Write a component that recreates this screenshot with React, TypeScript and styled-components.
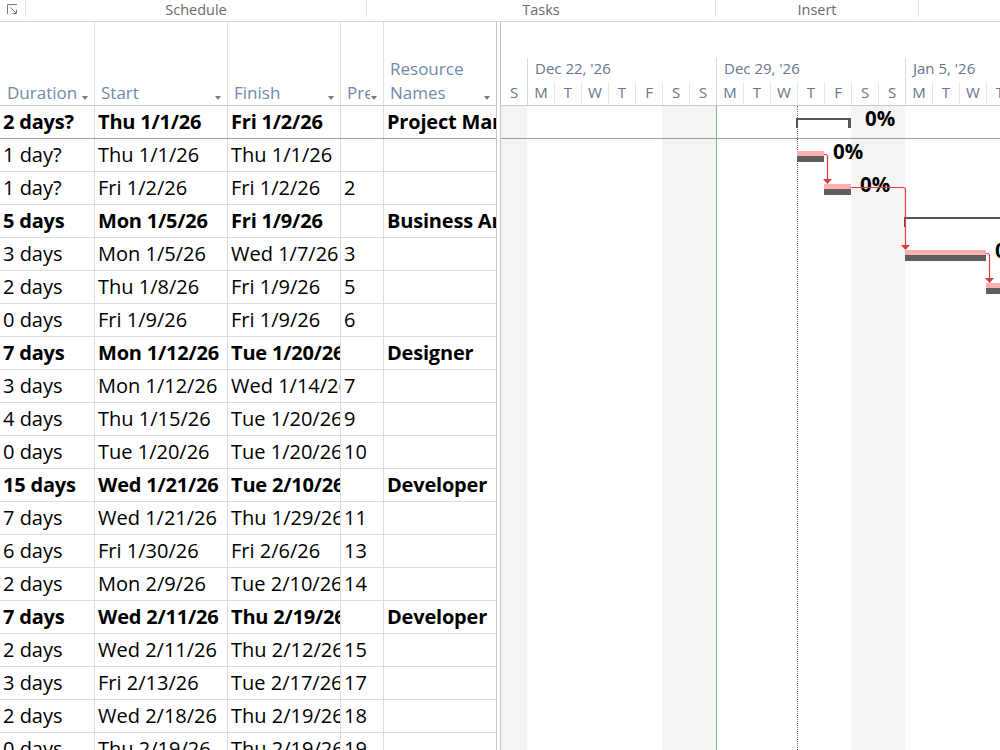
import React from 'react';
import styled, { createGlobalStyle } from 'styled-components';

const FONT = `"Open Sans", "Noto Sans", "Liberation Sans", sans-serif`;
const DAY = 27;
const FIRST = 26;
const dayX = (d: number) => (d === 0 ? 0 : FIRST + (d - 1) * DAY);
const ROW = 33;

const GlobalStyle = createGlobalStyle`
  html, body { margin: 0; padding: 0; background: #fff; overflow: hidden; }
  body { font-family: ${FONT}; }
  * { box-sizing: border-box; }
`;

const Page = styled.div`
  width: 1000px;
  height: 750px;
  overflow: hidden;
  display: flex;
  flex-direction: column;
  background: #fff;
`;

const Ribbon = styled.div`
  height: 22px;
  flex-shrink: 0;
  display: flex;
  border-bottom: 1px solid #d5d5d5;
`;

const RibbonGroup = styled.div<{ $w?: number }>`
  ${(p) => (p.$w ? `width: ${p.$w}px; flex-shrink: 0;` : 'flex: 1;')}
  height: 17px;
  padding-top: 2px;
  border-right: 1px solid ${(p) => (p.$w ? '#e0e0e0' : 'transparent')};
  display: flex;
  align-items: center;
  justify-content: center;
  font-size: 14.5px;
  line-height: 15px;
  color: #6b6b6b;
  white-space: nowrap;
`;

const Launcher = styled.svg`
  display: block;
`;

const Main = styled.div`
  flex: 1;
  display: flex;
  min-height: 0;
`;

const COLS = '95px 133px 113px 43px 112px';

const Table = styled.div`
  width: 497px;
  flex-shrink: 0;
  border-right: 1px solid #c4c4c4;
  display: flex;
  flex-direction: column;
  overflow: hidden;
`;

const HeaderRow = styled.div`
  display: grid;
  grid-template-columns: ${COLS};
  height: 84px;
  flex-shrink: 0;
  border-bottom: 1px solid #c9c9c9;
`;

const HeaderCell = styled.div<{ $last?: boolean; $first?: boolean }>`
  display: flex;
  align-items: flex-end;
  padding: 0 6px 0 ${(p) => (p.$first ? 7 : 6)}px;
  border-right: ${(p) => (p.$last ? 'none' : '1px solid #e1e1e1')};
  font-size: 17px;
  line-height: 24px;
  color: #7189aa;
  min-width: 0;
`;

const HeaderLabel = styled.span`
  flex: 1;
  min-width: 0;
  overflow: hidden;
  white-space: pre-line;
`;

const SortArrow = styled.span`
  flex-shrink: 0;
  width: 0;
  height: 0;
  margin-bottom: 5px;
  margin-left: 1px;
  border-left: 3.5px solid transparent;
  border-right: 3.5px solid transparent;
  border-top: 4px solid #7a7a7a;
`;

const BodyRow = styled.div<{ $dark?: boolean }>`
  display: grid;
  grid-template-columns: ${COLS};
  height: ${ROW}px;
  flex-shrink: 0;
  border-bottom: 1px solid ${(p) => (p.$dark ? '#9d9d9d' : '#dcdcdc')};
`;

const Cell = styled.div<{ $bold?: boolean; $last?: boolean }>`
  padding: 0 0 0 3px;
  font-size: 20px;
  line-height: 32px;
  font-weight: ${(p) => (p.$bold ? 700 : 400)};
  letter-spacing: ${(p) => (p.$bold ? '-0.2px' : '0')};
  color: #000;
  white-space: nowrap;
  overflow: hidden;
  border-right: ${(p) => (p.$last ? 'none' : '1px solid #dcdcdc')};
`;

const Gantt = styled.div`
  flex: 1;
  min-width: 0;
  margin-left: 3px;
  border-left: 1px solid #c4c4c4;
  display: flex;
  flex-direction: column;
  overflow: hidden;
`;

const GanttHeader = styled.div`
  height: 84px;
  flex-shrink: 0;
  border-bottom: 1px solid #c9c9c9;
  display: flex;
  flex-direction: column;
  justify-content: flex-end;
`;

const Tier = styled.div<{ $h: number }>`
  display: flex;
  height: ${(p) => p.$h}px;
`;

const WeekCell = styled.div<{ $w: number; $edge?: boolean }>`
  width: ${(p) => p.$w}px;
  flex-shrink: 0;
  border-left: ${(p) => (p.$edge ? 'none' : '1px solid #d9d9d9')};
  padding-left: 7px;
  font-size: 15px;
  line-height: 20px;
  color: #67768d;
  white-space: nowrap;
`;

const DayCell = styled.div<{ $w: number; $edge?: boolean; $week?: boolean }>`
  width: ${(p) => p.$w}px;
  flex-shrink: 0;
  border-left: ${(p) => (p.$edge ? 'none' : p.$week ? '1px solid #d9d9d9' : '1px solid #e6e6e6')};
  text-align: center;
  font-size: 15px;
  line-height: 20px;
  color: #67768d;
`;

const GanttBody = styled.div`
  flex: 1;
  position: relative;
  overflow: hidden;
`;

const Stripes = styled.div`
  position: absolute;
  inset: 0;
  display: flex;
  pointer-events: none;
`;

const Stripe = styled.div<{ $w: number; $weekend: boolean }>`
  width: ${(p) => p.$w}px;
  flex-shrink: 0;
  background: ${(p) => (p.$weekend ? '#f4f4f4' : 'transparent')};
`;

const Marker = styled.div<{ $kind: 'today' | 'start' }>`
  position: absolute;
  top: 0;
  bottom: 0;
  width: 0;
  border-left: 1px ${(p) => (p.$kind === 'today' ? 'solid #7cc27c' : 'dotted #6e6e6e')};
`;

const GanttRows = styled.div`
  position: relative;
  display: flex;
  flex-direction: column;
`;

const GanttRow = styled.div<{ $dark?: boolean }>`
  position: relative;
  height: ${ROW}px;
  flex-shrink: 0;
  border-bottom: 1px solid ${(p) => (p.$dark ? '#9d9d9d' : 'transparent')};
`;

const TaskBar = styled.div`
  position: absolute;
  top: 12px;
  height: 11px;
  background: linear-gradient(#ffb0b0 0 5px, #5e5e5e 5px 11px);
`;

const SummaryBar = styled.div`
  position: absolute;
  top: 12px;
  height: 10px;
  border-top: 2px solid #555;
  border-left: 2px solid #555;
  border-right: 3px solid #555;
`;

const BarLabel = styled.span`
  position: absolute;
  top: 2px;
  font-size: 20.5px;
  line-height: 20px;
  font-weight: 700;
  color: #000;
  white-space: nowrap;
`;

const Links = styled.svg`
  position: absolute;
  left: 0;
  top: 0;
  pointer-events: none;
`;

type Row = {
  dur: string;
  start: string;
  finish: string;
  pred: string;
  res: string;
  summary?: boolean;
  bar?: { kind: 'task' | 'summary'; day: number; span: number };
};

const rows: Row[] = [
  { dur: '2 days?', start: 'Thu 1/1/26', finish: 'Fri 1/2/26', pred: '', res: 'Project Manager', summary: true, bar: { kind: 'summary', day: 11, span: 2 } },
  { dur: '1 day?', start: 'Thu 1/1/26', finish: 'Thu 1/1/26', pred: '', res: '', bar: { kind: 'task', day: 11, span: 1 } },
  { dur: '1 day?', start: 'Fri 1/2/26', finish: 'Fri 1/2/26', pred: '2', res: '', bar: { kind: 'task', day: 12, span: 1 } },
  { dur: '5 days', start: 'Mon 1/5/26', finish: 'Fri 1/9/26', pred: '', res: 'Business Analyst', summary: true, bar: { kind: 'summary', day: 15, span: 5 } },
  { dur: '3 days', start: 'Mon 1/5/26', finish: 'Wed 1/7/26', pred: '3', res: '', bar: { kind: 'task', day: 15, span: 3 } },
  { dur: '2 days', start: 'Thu 1/8/26', finish: 'Fri 1/9/26', pred: '5', res: '', bar: { kind: 'task', day: 18, span: 2 } },
  { dur: '0 days', start: 'Fri 1/9/26', finish: 'Fri 1/9/26', pred: '6', res: '' },
  { dur: '7 days', start: 'Mon 1/12/26', finish: 'Tue 1/20/26', pred: '', res: 'Designer', summary: true },
  { dur: '3 days', start: 'Mon 1/12/26', finish: 'Wed 1/14/26', pred: '7', res: '' },
  { dur: '4 days', start: 'Thu 1/15/26', finish: 'Tue 1/20/26', pred: '9', res: '' },
  { dur: '0 days', start: 'Tue 1/20/26', finish: 'Tue 1/20/26', pred: '10', res: '' },
  { dur: '15 days', start: 'Wed 1/21/26', finish: 'Tue 2/10/26', pred: '', res: 'Developer', summary: true },
  { dur: '7 days', start: 'Wed 1/21/26', finish: 'Thu 1/29/26', pred: '11', res: '' },
  { dur: '6 days', start: 'Fri 1/30/26', finish: 'Fri 2/6/26', pred: '13', res: '' },
  { dur: '2 days', start: 'Mon 2/9/26', finish: 'Tue 2/10/26', pred: '14', res: '' },
  { dur: '7 days', start: 'Wed 2/11/26', finish: 'Thu 2/19/26', pred: '', res: 'Developer', summary: true },
  { dur: '2 days', start: 'Wed 2/11/26', finish: 'Thu 2/12/26', pred: '15', res: '' },
  { dur: '3 days', start: 'Fri 2/13/26', finish: 'Tue 2/17/26', pred: '17', res: '' },
  { dur: '2 days', start: 'Wed 2/18/26', finish: 'Thu 2/19/26', pred: '18', res: '' },
  { dur: '0 days', start: 'Thu 2/19/26', finish: 'Thu 2/19/26', pred: '19', res: '' },
];

const headers = ['Duration', 'Start', 'Finish', 'Predecessors', 'Resource\nNames'];

const DAY_LETTERS = ['S', 'M', 'T', 'W', 'T', 'F', 'S'];
const NUM_DAYS = 20;
const days = Array.from({ length: NUM_DAYS }, (_, i) => ({
  letter: DAY_LETTERS[i % 7],
  weekend: i % 7 === 0 || i % 7 === 6,
  w: i === 0 ? FIRST : DAY,
}));

const weeks = ["Dec 22, '26", "Dec 29, '26", "Jan 5, '26"];

const links: [number, number][] = [
  [1, 2],
  [2, 4],
  [4, 5],
];

function linkPath(a: number, b: number) {
  const ra = rows[a].bar!;
  const rb = rows[b].bar!;
  const x1 = dayX(ra.day + ra.span);
  const y1 = a * ROW + 15;
  const x2 = rb.day === ra.day + ra.span ? dayX(rb.day) + 3 : dayX(rb.day);
  const tip = b * ROW + 12;
  const r = 2;
  const d = `M${x1} ${y1 + 0.5} H${x2 - r} Q${x2 + 0.5} ${y1 + 0.5} ${x2 + 0.5} ${y1 + r + 0.5} V${tip - 5}`;
  const arrow = `${x2 - 4},${tip - 5} ${x2 + 5},${tip - 5} ${x2 + 0.5},${tip}`;
  return { d, arrow };
}

export default function App() {
  return (
    <Page>
      <GlobalStyle />
      <Ribbon>
        <RibbonGroup $w={26}>
          <Launcher width="11" height="11" viewBox="0 0 11 11">
            <path d="M0.5 10 V0.5 H10" fill="none" stroke="#7a7a7a" strokeWidth="1" />
            <path d="M3.5 3.5 L9 9" fill="none" stroke="#7a7a7a" strokeWidth="1" />
            <path d="M9.5 5.5 V9.5 H5.5" fill="none" stroke="#7a7a7a" strokeWidth="1" />
          </Launcher>
        </RibbonGroup>
        <RibbonGroup $w={341}>Schedule</RibbonGroup>
        <RibbonGroup $w={349}>Tasks</RibbonGroup>
        <RibbonGroup $w={203}>Insert</RibbonGroup>
        <RibbonGroup />
      </Ribbon>
      <Main>
        <Table>
          <HeaderRow>
            {headers.map((h, i) => (
              <HeaderCell key={i} $first={i === 0} $last={i === headers.length - 1}>
                <HeaderLabel>{h}</HeaderLabel>
                <SortArrow />
              </HeaderCell>
            ))}
          </HeaderRow>
          {rows.map((r, i) => (
            <BodyRow key={i} $dark={i === 0}>
              <Cell $bold={r.summary}>{r.dur}</Cell>
              <Cell $bold={r.summary}>{r.start}</Cell>
              <Cell $bold={r.summary}>{r.finish}</Cell>
              <Cell $bold={r.summary}>{r.pred}</Cell>
              <Cell $bold={r.summary} $last>
                {r.res}
              </Cell>
            </BodyRow>
          ))}
        </Table>
        <Gantt>
          <GanttHeader>
            <Tier $h={24}>
              <WeekCell $w={FIRST} $edge />
              {weeks.map((w) => (
                <WeekCell key={w} $w={DAY * 7}>
                  {w}
                </WeekCell>
              ))}
            </Tier>
            <Tier $h={23}>
              {days.map((d, i) => (
                <DayCell key={i} $w={d.w} $edge={i === 0} $week={i % 7 === 1}>
                  {d.letter}
                </DayCell>
              ))}
            </Tier>
          </GanttHeader>
          <GanttBody>
            <Stripes>
              {days.map((d, i) => (
                <Stripe key={i} $w={d.w} $weekend={d.weekend} />
              ))}
            </Stripes>
            <Marker $kind="today" style={{ left: dayX(8) }} />
            <Marker $kind="start" style={{ left: dayX(11) }} />
            <GanttRows>
              {rows.map((r, i) => {
                const b = r.bar;
                if (!b) return <GanttRow key={i} $dark={i === 0} />;
                const left = dayX(b.day);
                const width = b.span * DAY;
                return (
                  <GanttRow key={i} $dark={i === 0}>
                    {b.kind === 'summary' ? (
                      <SummaryBar style={{ left: left - 1, width: width + 1 }} />
                    ) : (
                      <TaskBar style={{ left, width }} />
                    )}
                    <BarLabel style={{ left: left + width + (b.kind === 'summary' ? 14 : 9) }}>0%</BarLabel>
                  </GanttRow>
                );
              })}
            </GanttRows>
            <Links width="500" height="300" viewBox="0 0 500 300">
              {links.map(([a, b], i) => {
                const { d, arrow } = linkPath(a, b);
                return (
                  <g key={i}>
                    <path d={d} fill="none" stroke="#e0393e" strokeWidth="1.2" />
                    <polygon points={arrow} fill="#e0393e" />
                  </g>
                );
              })}
            </Links>
          </GanttBody>
        </Gantt>
      </Main>
    </Page>
  );
}
